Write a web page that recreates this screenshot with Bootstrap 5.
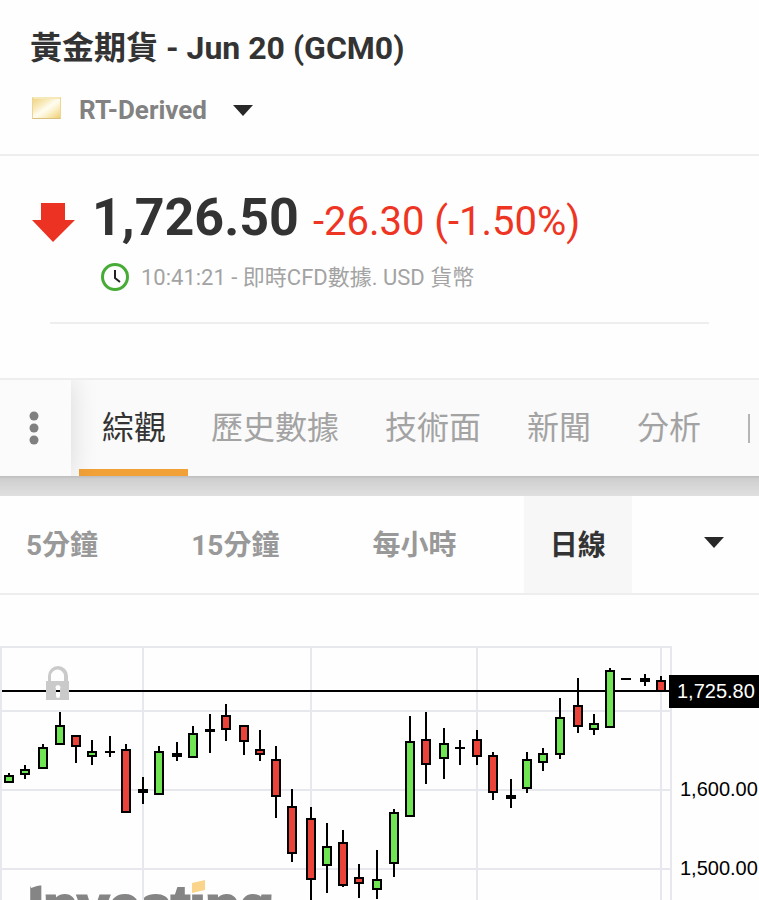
<!DOCTYPE html>
<html lang="zh-Hant">
<head>
<meta charset="utf-8">
<meta name="viewport" content="width=device-width, initial-scale=1">
<title>黃金期貨 - Jun 20 (GCM0)</title>
<link href="https://cdn.jsdelivr.net/npm/bootstrap@5.3.0/dist/css/bootstrap.min.css" rel="stylesheet">
<style>
body{font-family:Roboto,"Noto Sans CJK TC",sans-serif;color:#333;background:#fefefe}
.rule-b{border-bottom:2px solid #eee}
.instrument{padding:24px 30px 24px}
.instrument h1{font-size:32px;line-height:48px;font-weight:700}
.source{gap:17px;margin-top:18px;height:40px}
.source select{appearance:none;border:0;background:none;padding:0;font-size:26px;line-height:40px;font-weight:700;color:#828282}
.source .caret{margin-left:9px}
.quote{padding:32px 32px 28px}
.last-price{font-size:52px;line-height:60px;font-weight:700}
.change{font-size:40px;line-height:60px;color:#ee3524}
.price-line{gap:14px}
.arrow-gap{margin-right:17px}
.stamp{font-size:22px;line-height:32px;color:#a3a3a3;padding-left:69px;gap:12px;margin-top:10px}
.inner-rule{height:2px;background:#eee;margin:0 50px}
.tabs{margin-top:54px;border-top:2px solid #eee;background:#fafafa}
.more-btn{width:71px;border:0;background:#fbfbfb;box-shadow:0 0 28px rgba(0,0,0,.14);clip-path:inset(0 -40px 0 0);padding:0 3px 0 0}
.tab-list{padding:0 8px;min-width:0}
.tab-list a{font-size:32px;line-height:48px;padding:24px 23px 17px 23px;color:#a3a3a3;border-bottom:7px solid transparent;text-decoration:none}
.tab-list a.active{color:#333;border-color:#f1a136;padding-right:22px}
.cut-line{width:2px;height:29px;margin-left:24px;background:#b5b5b5}
.drop{height:20px;background:linear-gradient(#bdbdbd,#cfcfcf 3px,#e0e0e0)}
.frames button{border:0;background:none;color:#999;font-size:28px;line-height:42px;font-weight:700;padding:29px 26px 26px}
.frames button.active{background:#f7f7f7;color:#333}
.frames .more-frames{padding:0 35px 4px 31px}
.chart{padding-top:45px}
.chart svg{width:100%;height:auto}
.axis{font-family:"Liberation Sans",sans-serif;font-size:20px}
.brand{font-family:"Liberation Sans",sans-serif;font-size:56px;font-weight:700;fill:#858585;stroke:#858585;stroke-width:3px}
</style>
<script src="https://cdn.jsdelivr.net/npm/bootstrap@5.3.0/dist/js/bootstrap.bundle.min.js"></script>
</head>
<body class="overflow-x-hidden">
<header class="instrument rule-b">
  <h1 class="m-0">黃金期貨 - Jun 20 (GCM0)</h1>
  <div class="source d-flex align-items-center">
    <svg width="32" height="26" viewBox="0 0 32 26" aria-hidden="true">
      <defs><linearGradient id="gold" x2="1" y2="1"><stop offset="0" stop-color="#f0d584"/><stop offset=".3" stop-color="#f8ebbd"/><stop offset=".5" stop-color="#fffdf2"/><stop offset=".68" stop-color="#fbf0c9"/><stop offset="1" stop-color="#efcf74"/></linearGradient></defs>
      <path fill="#ecd596" d="M2 0h29v22H2z"/><path fill="url(#gold)" d="M3 2h27v19H3z"/><path fill="#f6e8b8" d="M2 0h29l-2 2H4z"/><path fill="#d8c07c" d="M2 22l1-1h27l1 1z"/>
    </svg>
    <select id="source" aria-label="報價來源"><option>RT-Derived</option></select>
    <svg class="caret" width="20" height="11" viewBox="0 0 20 11" aria-hidden="true"><path fill="#282828" d="M0 0h20L10 11z"/></svg>
  </div>
</header>
<main>
<section class="quote">
  <div class="d-flex align-items-center">
    <svg class="arrow-gap flex-shrink-0 mt-1" width="43" height="39" viewBox="0 0 43 39" role="img" aria-label="下跌"><path fill="#ec3323" d="M9 0h24v17h10L21 39 0 17h9z"/></svg>
    <div class="price-line d-flex align-items-baseline text-nowrap"><span class="last-price">1,726.50</span><span class="change">-26.30 (-1.50%)</span></div>
  </div>
  <div class="stamp d-flex align-items-center">
    <svg width="28" height="30" viewBox="0 0 28 30" aria-hidden="true"><circle cx="14" cy="14" r="12.5" fill="#fff" stroke="#47ac35" stroke-width="3"/><path fill="none" stroke="#222" stroke-width="2" d="M14 7v8l5 4"/></svg>
    <span>10:41:21 - 即時CFD數據. USD 貨幣</span>
  </div>
</section>
<div class="inner-rule"></div>
<nav class="tabs d-flex" aria-label="分頁">
  <button class="more-btn flex-shrink-0" type="button" aria-label="選單"><svg width="10" height="34" viewBox="0 0 10 34"><g fill="#808080"><circle cx="5" cy="5" r="4.5"/><circle cx="5" cy="17" r="4.5"/><circle cx="5" cy="29" r="4.5"/></g></svg></button>
  <div class="tab-list d-flex align-items-center text-nowrap overflow-hidden">
    <a class="active" href="#overview" aria-current="page">綜觀</a><a href="#history">歷史數據</a><a href="#technical">技術面</a><a href="#news">新聞</a><a href="#analysis">分析</a>
    <span class="cut-line flex-shrink-0"></span>
  </div>
</nav>
<div class="drop"></div>
<div class="frames rule-b d-flex justify-content-between text-nowrap" role="group" aria-label="時間範圍">
  <button type="button">5分鐘</button><button type="button">15分鐘</button><button type="button">每小時</button><button type="button" class="active" aria-pressed="true">日線</button>
  <button type="button" aria-label="更多時間範圍" class="more-frames d-flex align-items-center"><svg width="20" height="11" viewBox="0 0 20 11"><path fill="#282828" d="M0 0h20L10 11z"/></svg></button>
</div>
<section class="chart">
  <svg class="d-block" viewBox="0 0 759 260" role="img" aria-label="黃金期貨日線圖">
    <text class="brand" x="28" y="285">Investing</text>
    <path fill="#fefefe" d="M28 240h18v3l-15 5zM190 240h18v13h-18z"/>
    <path fill="#fbd48c" d="M192 243l13-3v10l-13 3z"/>
    <path fill="none" stroke="#e7e7ee" stroke-width="2" d="M1 260V7h670v253M143 7v253M311 7v253M477 7v253M661 7v253M2 71h669M2 150h669M2 229h669"/>
    <path stroke="#000" stroke-width="2" d="M2 51h668"/>
    <g id="candles"></g>
    <path fill="#cacaca" fill-rule="evenodd" d="M46 41h2v-5a10 10 0 0 1 20 0v5h1v19H46zM51 41h13v-5a6.5 6.5 0 0 0-13 0zM56 49v7a2 2 0 0 0 4 0v-7a2.5 2.5 0 1 0-4 0z"/>
    <path d="M669 35h90v33h-90z"/>
    <g class="axis"><text x="677" y="58" fill="#fff">1,725.80</text><text x="680" y="156">1,600.00</text><text x="680" y="235">1,500.00</text></g>
  </svg>
</section>
</main>
<script>
// x, wick top, wick bottom, body top, body bottom, kind (g up, r down, k flat)
const candles = [
[9,133,143,135,143,'g'],[25,125,139,129,135,'g'],[43,104,129,107,129,'g'],[60,72,105,85,105,'g'],[76,95,123,95,107,'r'],
[92,100,125,111,117,'g'],[110,96,117,111,113,'k'],[126,104,173,109,173,'r'],[143,137,164,149,153,'k'],[159,106,155,111,155,'g'],
[177,102,121,113,117,'k'],[193,86,118,93,118,'g'],[210,74,113,89,92,'k'],[226,64,101,75,90,'r'],[244,85,115,85,102,'r'],
[260,90,121,109,115,'r'],[276,106,178,119,157,'r'],[292,149,222,166,214,'r'],[311,167,260,178,240,'r'],[327,183,253,206,226,'g'],
[343,190,247,202,246,'r'],[359,224,258,237,244,'r'],[377,210,259,239,250,'g'],[394,169,237,172,224,'g'],[410,76,177,101,177,'g'],
[426,72,144,99,125,'r'],[444,88,139,103,119,'g'],[460,100,125,107,109,'k'],[477,90,125,99,117,'r'],[493,112,160,115,153,'r'],
[511,139,168,155,159,'k'],[527,112,153,119,149,'g'],[543,108,131,113,123,'g'],[560,58,119,77,115,'g'],[578,38,93,65,87,'r'],
[594,74,95,83,90,'g'],[610,28,88,30,88,'g'],[626,38,40,38,40,'k'],[645,34,46,38,42,'k'],[661,36,52,40,52,'r']];
const fill = {g:'#70e553', r:'#ea4339', k:'#000'};
document.getElementById('candles').innerHTML = candles.map(([x,h,l,t,b,k]) =>
  `<path stroke="#000" stroke-width="2" d="M${x} ${h}V${l}"/><rect x="${x-5}" y="${t}" width="10" height="${b-t}"/>` +
  (k === 'k' ? '' : `<rect x="${x-3}" y="${t+2}" width="6" height="${b-t-4}" fill="${fill[k]}"/>`)).join('');
</script>
</body>
</html>
